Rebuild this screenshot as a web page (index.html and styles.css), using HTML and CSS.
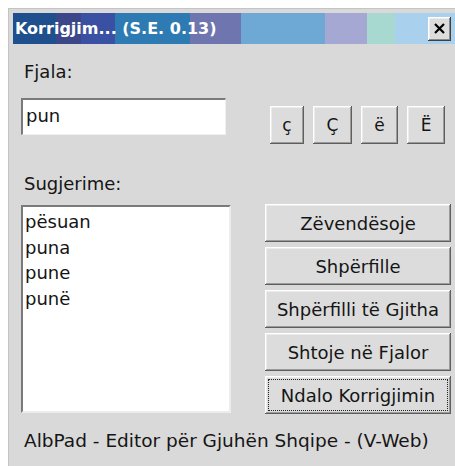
FILE: index.html
```html
<!DOCTYPE html>
<html lang="sq">
<head>
<meta charset="utf-8">
<title>Korrigjim</title>
<link rel="stylesheet" href="styles.css">
</head>
<body>
<div class="window">
  <div class="titlebar">
    <span class="title">Korrigjim... (S.E. 0.13)</span>
    <button class="close" type="button" aria-label="Mbyll">
      <svg width="11" height="11" viewBox="0 0 11 11"><path d="M1 1 L10 10 M10 1 L1 10" stroke="#000" stroke-width="2.2" fill="none"/></svg>
    </button>
  </div>
  <div class="content">
    <div class="label">Fjala:</div>
    <div class="word-row">
      <div class="field">pun</div>
      <div class="chars">
        <button class="btn char c1" type="button">ç</button>
        <button class="btn char c2" type="button">Ç</button>
        <button class="btn char c3" type="button">ë</button>
        <button class="btn char c4" type="button">Ë</button>
      </div>
    </div>
    <div class="label label-sug">Sugjerime:</div>
    <div class="main-row">
      <ul class="list">
        <li>pësuan</li>
        <li>puna</li>
        <li>pune</li>
        <li>punë</li>
      </ul>
      <div class="actions">
        <button class="btn action" type="button">Zëvendësoje</button>
        <button class="btn action" type="button">Shpërfille</button>
        <button class="btn action" type="button">Shpërfilli të Gjitha</button>
        <button class="btn action" type="button">Shtoje në Fjalor</button>
        <button class="btn action focused" type="button">Ndalo Korrigjimin</button>
      </div>
    </div>
    <div class="status">AlbPad - Editor për Gjuhën Shqipe - (V-Web)</div>
  </div>
</div>
</body>
</html>
```
FILE: styles.css
```css
html, body {
  margin: 0;
  padding: 0;
  background: #ffffff;
  overflow: hidden;
  height: 466px;
}

.window {
  margin: 8px 0 0 8px;
  width: 447px;
  height: 458px;
  box-sizing: border-box;
  border-top: 1px solid #c4c4c4;
  border-left: 1px solid #c4c4c4;
  background: #d9d9d9;
  padding: 4px 0 0 4px;
  font-family: "DejaVu Sans", sans-serif;
  color: #151515;
}

/* title bar with its band of colour blocks */
.titlebar {
  height: 31px;
  display: flex;
  align-items: center;
  padding: 0 4px 0 2px;
  background: linear-gradient(to right,
    #1f4f8c 0, #1f4f8c 43px,
    #3b4788 43px, #3b4788 68px,
    #3a50a2 68px, #3a50a2 102px,
    #2d7bb2 102px, #2d7bb2 177px,
    #6f75ae 177px, #6f75ae 228px,
    #6ea9d5 228px, #6ea9d5 312px,
    #a5a8d2 312px, #a5a8d2 354px,
    #a8d9d1 354px, #a8d9d1 382px,
    #a9d1ee 382px, #a9d1ee 100%);
}

.title {
  font-family: "DejaVu Sans", sans-serif;
  font-weight: bold;
  font-size: 16px;
  color: #fff;
  flex: 1;
  white-space: nowrap;
}

.close {
  width: 23px;
  height: 24px;
  padding: 0;
  border: none;
  background: #dcdcdc;
  box-shadow: inset -1px -1px #404040, inset 1px 1px #ffffff, inset -2px -2px #8a8a8a, inset 2px 2px #ececec;
  display: flex;
  align-items: center;
  justify-content: center;
}

.close svg {
  display: block;
  margin: -1px 0 0 -1px;
}

.content {
  padding: 0 4px 0 8px;
}

.label {
  margin-top: 17px;
  padding-left: 3px;
  font-size: 18px;
  line-height: 22px;
}

.word-row {
  display: flex;
  align-items: flex-start;
  margin-top: 15px;
}

.field {
  width: 205px;
  height: 37px;
  box-sizing: border-box;
  background: #fff;
  border-top: 2px solid #7a7a7a;
  border-left: 2px solid #7a7a7a;
  border-right: 1px solid #f0f0f0;
  border-bottom: 1px solid #f0f0f0;
  padding-left: 3px;
  font-size: 18px;
  line-height: 32px;
}

.chars {
  display: flex;
  gap: 9px;
  margin: 8px 6px 0 auto;
}

.btn {
  border: none;
  padding: 0;
  background: #dcdcdc;
  color: #151515;
  font-family: "DejaVu Sans", sans-serif;
  box-shadow: inset -1px -1px #5e5e5e, inset 1px 1px #ffffff, inset -2px -2px #9c9c9c, inset 2px 2px #ececec;
}

.char {
  height: 38px;
  font-size: 17px;
}

.c1 { width: 34px; }
.c2 { width: 39px; }
.c3 { width: 37px; }
.c4 { width: 38px; }

.label-sug {
  margin-top: 29px;
}

.main-row {
  display: flex;
  margin-top: 10px;
}

.list {
  margin: 0;
  width: 210px;
  height: 208px;
  box-sizing: border-box;
  list-style: none;
  background: #fff;
  border-top: 2px solid #7a7a7a;
  border-left: 2px solid #7a7a7a;
  border-right: 2px solid #ececec;
  border-bottom: 2px solid #ececec;
  padding: 2px 0 0 2px;
  font-size: 18px;
  line-height: 25.6px;
}

.actions {
  display: flex;
  flex-direction: column;
  gap: 5px;
  margin: -1px 0 0 auto;
  width: 186px;
}

.action {
  height: 38px;
  font-size: 18px;
}

.focused {
  outline: 1px dotted #222;
  outline-offset: -4px;
}

.status {
  margin-top: 16px;
  padding-left: 3px;
  font-size: 18.5px;
  line-height: 22px;
}
```
